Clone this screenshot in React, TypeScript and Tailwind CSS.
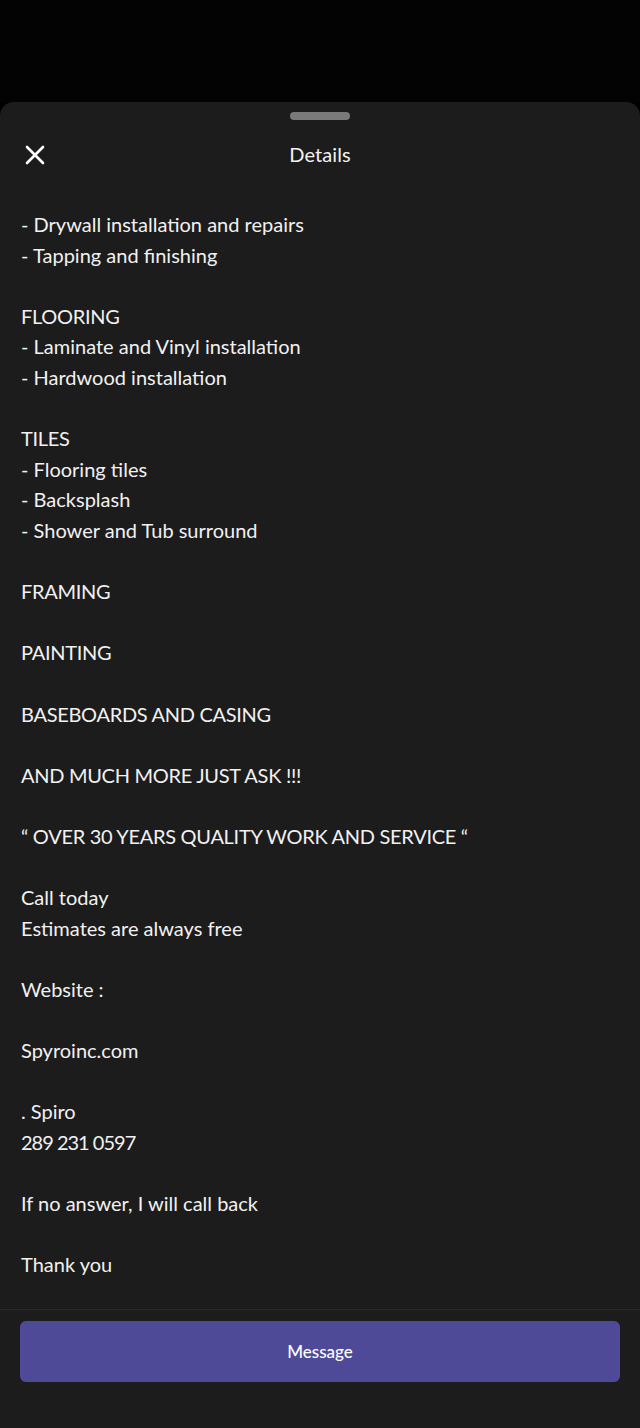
import React from "react";

type Line = { text: string; track?: string };

const lines: Line[] = [
  { text: "- Drywall installation and repairs" },
  { text: "- Tapping and finishing" },
  { text: "" },
  { text: "FLOORING", track: "tracking-[-0.3px]" },
  { text: "- Laminate and Vinyl installation" },
  { text: "- Hardwood installation" },
  { text: "" },
  { text: "TILES", track: "tracking-[-0.3px]" },
  { text: "- Flooring tiles" },
  { text: "- Backsplash" },
  { text: "- Shower and Tub surround" },
  { text: "" },
  { text: "FRAMING", track: "tracking-[-0.3px]" },
  { text: "" },
  { text: "PAINTING", track: "tracking-[-0.3px]" },
  { text: "" },
  { text: "BASEBOARDS AND CASING", track: "tracking-[-0.3px]" },
  { text: "" },
  { text: "AND MUCH MORE JUST ASK !!!", track: "tracking-[-0.3px]" },
  { text: "" },
  { text: "\u201C OVER 30 YEARS QUALITY WORK AND SERVICE \u201C", track: "tracking-[-0.3px]" },
  { text: "" },
  { text: "Call today" },
  { text: "Estimates are always free" },
  { text: "" },
  { text: "Website :" },
  { text: "" },
  { text: "Spyroinc.com" },
  { text: "" },
  { text: ". Spiro" },
  { text: "289 231 0597", track: "tracking-[-1px]" },
  { text: "" },
  { text: "If no answer, I will call back" },
  { text: "" },
  { text: "Thank you" },
];

export default function App() {
  return (
    <div
      className="h-[1428px] w-[640px] bg-black flex flex-col overflow-hidden"
      style={{ fontFamily: "Lato, 'Noto Sans', sans-serif" }}
    >
      <div className="h-[102px] shrink-0 bg-[#030303]" />
      <div className="flex-1 min-h-0 flex flex-col bg-[#1c1c1c] rounded-t-[14px]">
        <div className="mt-[10px] mx-auto w-[60px] h-[8px] rounded-full bg-[#7a7a7a]" />
        <div className="relative h-[68px] shrink-0 flex items-center justify-center">
          <button className="absolute left-[24px] top-[24px] w-[22px] h-[22px] flex items-center justify-center">
            <svg width="20" height="20" viewBox="0 0 20 20" fill="none">
              <path d="M2 2 L18 18 M18 2 L2 18" stroke="#ffffff" strokeWidth="2.6" strokeLinecap="round" />
            </svg>
          </button>
          <span className="text-[20px] text-[#f2f2f2] tracking-[0.1px]">Details</span>
        </div>
        <div className="flex-1 min-h-0 overflow-hidden px-[21px] pt-[21px]">
          {lines.map((l, i) =>
            l.track === "tracking-[-0.3px]" ? (
              <div key={i} className="h-[30.6px] leading-[30.6px] text-[20px] text-[#f1f1f1] whitespace-pre tracking-[-0.3px]">
                {l.text}
              </div>
            ) : l.track === "tracking-[-1px]" ? (
              <div key={i} className="h-[30.6px] leading-[30.6px] text-[20px] text-[#f1f1f1] whitespace-pre tracking-[-1px]">
                {l.text}
              </div>
            ) : (
              <div key={i} className="h-[30.6px] leading-[30.6px] text-[20px] text-[#f1f1f1] whitespace-pre">
                {l.text}
              </div>
            )
          )}
        </div>
        <div className="shrink-0 border-t border-[#2a2a2a] px-[20px] pt-[11px] pb-[46px]">
          <button className="w-full h-[61px] rounded-[6px] bg-[#4f4a98] text-white text-[17px] font-medium flex items-center justify-center">
            Message
          </button>
        </div>
      </div>
    </div>
  );
}
